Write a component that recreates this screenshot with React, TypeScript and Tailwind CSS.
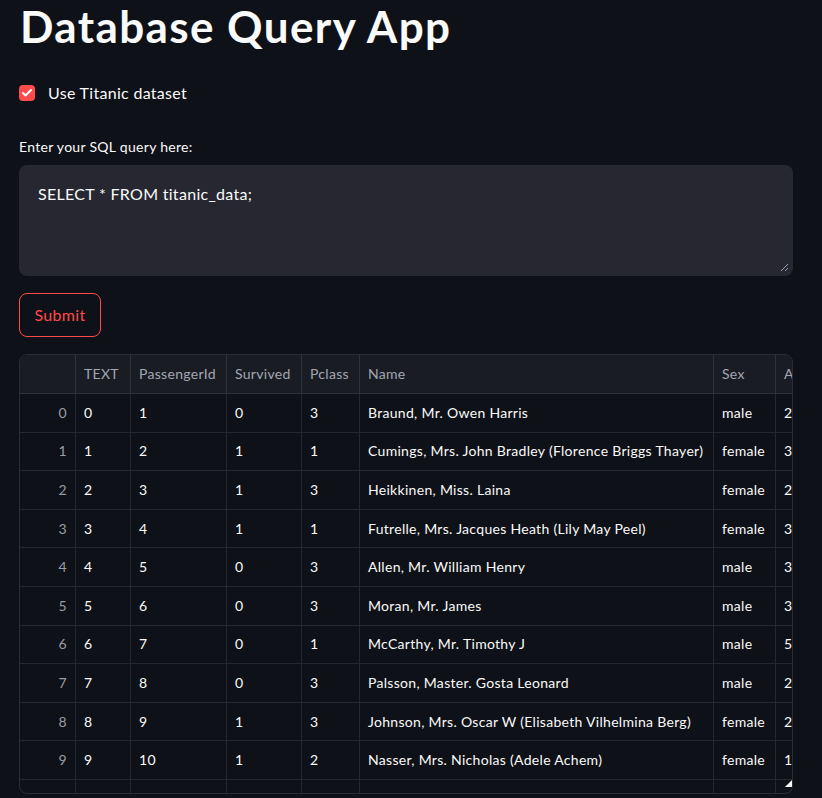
import { Check } from 'lucide-react'

const COLS = [
  { key: 'idx', label: '', w: 'w-[56px]', align: 'text-right' },
  { key: 'text', label: 'TEXT', w: 'w-[55px]', align: 'text-left' },
  { key: 'pid', label: 'PassengerId', w: 'w-[96px]', align: 'text-left' },
  { key: 'surv', label: 'Survived', w: 'w-[75px]', align: 'text-left' },
  { key: 'pclass', label: 'Pclass', w: 'w-[58px]', align: 'text-left' },
  { key: 'name', label: 'Name', w: 'w-[354px]', align: 'text-left' },
  { key: 'sex', label: 'Sex', w: 'w-[62px]', align: 'text-left' },
  { key: 'age', label: 'Age', w: 'w-[60px]', align: 'text-left' },
]

const ROWS: string[][] = [
  ['0', '1', '0', '3', 'Braund, Mr. Owen Harris', 'male', '22'],
  ['1', '2', '1', '1', 'Cumings, Mrs. John Bradley (Florence Briggs Thayer)', 'female', '38'],
  ['2', '3', '1', '3', 'Heikkinen, Miss. Laina', 'female', '26'],
  ['3', '4', '1', '1', 'Futrelle, Mrs. Jacques Heath (Lily May Peel)', 'female', '35'],
  ['4', '5', '0', '3', 'Allen, Mr. William Henry', 'male', '35'],
  ['5', '6', '0', '3', 'Moran, Mr. James', 'male', '30'],
  ['6', '7', '0', '1', 'McCarthy, Mr. Timothy J', 'male', '54'],
  ['7', '8', '0', '3', 'Palsson, Master. Gosta Leonard', 'male', '2'],
  ['8', '9', '1', '3', 'Johnson, Mrs. Oscar W (Elisabeth Vilhelmina Berg)', 'female', '27'],
  ['9', '10', '1', '2', 'Nasser, Mrs. Nicholas (Adele Achem)', 'female', '14'],
  ['10', '11', '1', '3', 'Sandstrom, Miss. Marguerite Rut', 'female', '4'],
]

export default function App() {
  return (
    <div className="min-h-[798px] w-[822px] overflow-hidden bg-[#0e1117] text-[#fafafa] font-['Lato','Liberation_Sans',sans-serif] tracking-[0.3px]">
      <div className="w-[774px] ml-[19px]">
        <h1 className="text-[44px] font-bold leading-[58px] pl-px -mt-[3px] tracking-[1.4px]">Database Query App</h1>

        {/* checkbox */}
        <label className="flex items-center gap-[13px] mt-[26px] h-[24px]">
          <span className="w-4 h-4 rounded-[4px] bg-[#ff4b4b] flex items-center justify-center">
            <Check className="w-3 h-3 text-white" strokeWidth={4} />
          </span>
          <span className="text-base">Use Titanic dataset</span>
        </label>

        {/* query */}
        <div className="mt-[32px] text-sm leading-[20px] h-[20px]">Enter your SQL query here:</div>
        <div className="relative mt-[8px] h-[111px] rounded-lg bg-[#262730] px-[19px] pt-[17px] text-base leading-[24px]">
          SELECT * FROM titanic_data;
          <svg className="absolute right-[5px] bottom-[5px]" width="8" height="8" viewBox="0 0 8 8">
            <path d="M1 8 L8 1 M5 8 L8 5" stroke="#9ca0aa" strokeWidth="1" />
          </svg>
        </div>

        <button className="mt-[17px] h-[44px] w-[82px] rounded-lg border border-[#ff4b4b] text-[#ff4b4b] text-base">
          Submit
        </button>

        {/* dataframe */}
        <div className="relative mt-[17px] h-[440px] rounded-lg border border-[#2b2d35] overflow-hidden text-sm">
          <div className="flex h-[39px] bg-[#1a1c24] border-b border-[#30323a] text-[#a3a6b0]">
            {COLS.map(c => (
              <div key={c.key} className={`${c.w} shrink-0 border-r border-[#30323a] px-2 flex items-center whitespace-nowrap`}>
                {c.label}
              </div>
            ))}
          </div>
          {ROWS.map((r, i) => (
            <div key={i} className="flex h-[38.6px] border-b border-[#262830]">
              <div className="w-[56px] shrink-0 border-r border-[#262830] pr-2 flex items-center justify-end text-[#9a9ca4]">
                {i}
              </div>
              {r.map((v, j) => (
                <div key={j} className={`${COLS[j + 1].w} shrink-0 border-r border-[#262830] px-2 flex items-center whitespace-nowrap overflow-hidden`}>
                  {v}
                </div>
              ))}
            </div>
          ))}
          <div className="absolute right-0 bottom-[6px] w-0 h-0 border-l-[7px] border-l-transparent border-b-[7px] border-b-white" />
        </div>
      </div>
    </div>
  )
}
